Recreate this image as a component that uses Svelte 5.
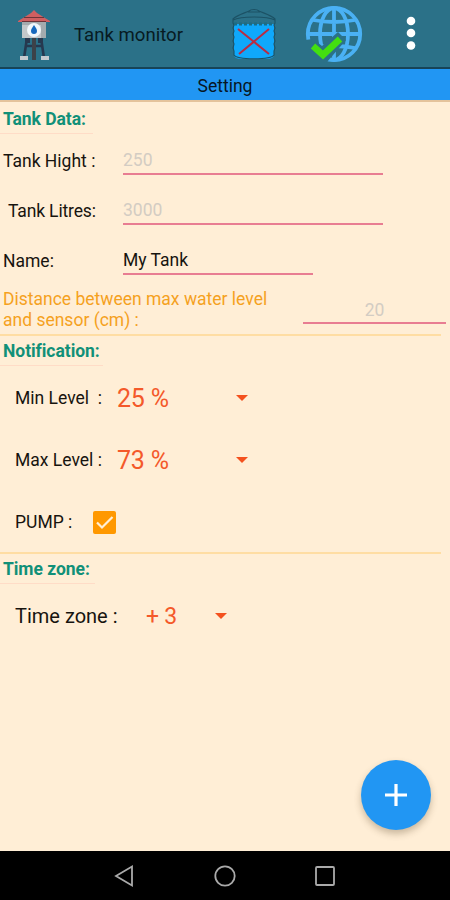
<script>
    let tank = $state({ height: '', litres: '', name: 'My Tank', distance: '' });
    let pump = $state(true);

    const levels = [
        { label: 'Min Level\u00a0 :', value: '25 %' },
        { label: 'Max Level :', value: '73 %' }
    ];
</script>

<div class="screen">
    <header>
        <svg class="tower" viewBox="0 0 34 52" width="34" height="52">
            <path d="M10 29 7 49M24 29l3 20M8 37h18" stroke="#26384f" stroke-width="2.6" fill="none" />
            <path d="M17 29v22" stroke="#3c4249" stroke-width="4" />
            <path d="M8 29h5v5H8zM21 29h5v5h-5z" fill="#26384f" />
            <path d="M5 13h24v16H5z" fill="#c3c8ca" />
            <path d="M5 13h24v3H5zM24 13h5v16h-5z" fill="#a4abae" />
            <path d="M17 1l3 3 8 5 5 3v1H1v-1l5-3 8-5z" fill="#cf5f61" />
            <path d="M7 8.5h20M5 12.5h24" stroke="#6c3439" stroke-width="1.2" />
            <circle cx="17" cy="21" r="7" fill="#f2f8fb" />
            <path d="M17 16c2 3 3 4 3 6a3 3 0 0 1-6 0c0-2 1-3 3-6z" fill="#1769bd" />
            <path d="M3 47h8v4H3zM24 47h8v4h-8z" fill="#c5cad0" />
        </svg>
        <h1>Tank monitor</h1>
        <svg class="barrel" viewBox="0 0 46 54" width="46" height="54">
            <path d="M3 16h40v32q-2 3-7 3H10q-5 0-7-3z" fill="#0fa8fb" />
            <path d="M2 11C6 7 14 5 18 3c2-2 8-2 10 0 4 2 12 4 16 8v4l-1 2 1 3-1 3 1 3-1 3 1 4-1 3 1 4-1 3v4c-3 5-37 5-40 0v-4l-1-3 1-4-1-3 1-4-1-3 1-3-1-3 1-3-1-2zM2 12c8-4 34-4 42 0M17 4h12" fill="none" stroke="#1c5265" stroke-width="1.1" />
            <path d="M3 16h40" stroke="#1b6c84" stroke-width="3" stroke-dasharray="3 2" />
            <path d="M7 21l31 25M38 21 8 46" stroke="#b92c42" stroke-width="2" />
        </svg>
        <svg class="globe" viewBox="0 0 58 58" width="58" height="58">
            <g fill="none" stroke="#4ab1f4" stroke-width="3.8">
                <circle cx="29" cy="29" r="26.2" />
                <ellipse cx="29" cy="29" rx="14" ry="26" />
                <path d="M29 2v54M2 29h54M8 15q21 4 42 0M8 43q21-4 42 0" />
            </g>
            <path d="M0 35l8-1 9 7 16-14 8 8-19 22-4 1H0z" fill="#2b7188" />
            <path d="M8 41l10 9 17-16" fill="none" stroke="#43df10" stroke-width="6.6" />
        </svg>
        <svg class="more" viewBox="0 0 10 36" width="10" height="36">
            <g fill="#fff">
                <circle cx="5" cy="5" r="4.3" />
                <circle cx="5" cy="17" r="4.3" />
                <circle cx="5" cy="29.5" r="4.3" />
            </g>
        </svg>
    </header>

    <div class="title">Setting</div>

    <main>
        <h2 class="data">Tank Data:</h2>
        <label class="row">
            <span>Tank Hight :</span>
            <input placeholder="250" bind:value={tank.height} />
        </label>
        <label class="row">
            <span class="litres">Tank Litres:</span>
            <input placeholder="3000" bind:value={tank.litres} />
        </label>
        <label class="row">
            <span>Name:</span>
            <input class="name" bind:value={tank.name} />
        </label>
        <label class="distance">
            <span>Distance between max water level<br />and sensor (cm) :</span>
            <input placeholder="20" bind:value={tank.distance} />
        </label>
        <hr />

        <h2 class="notification">Notification:</h2>
        {#each levels as level}
            <div class="level">
                <span class="label">{level.label}</span>
                <span class="value">{level.value}</span>
                <i class="arrow"></i>
            </div>
        {/each}
        <div class="pump">
            <span>PUMP :</span>
            <button class="check" aria-label="Pump" onclick={() => pump = !pump}>
                {#if pump}
                    <svg viewBox="0 0 23 23" width="23" height="23">
                        <path d="M4 11.5l5 5L19.5 6" fill="none" stroke="#ffeed6" stroke-width="2.2" />
                    </svg>
                {/if}
            </button>
        </div>
        <hr />

        <h2 class="zone">Time zone:</h2>
        <div class="timezone">
            <span class="label">Time zone :</span>
            <span class="value">+ 3</span>
            <i class="arrow"></i>
        </div>

        <button class="add" aria-label="Add">
            <svg viewBox="0 0 24 24" width="24" height="24">
                <path d="M12 1v22M1 12h22" stroke="#fff" stroke-width="3.2" />
            </svg>
        </button>
    </main>

    <nav>
        <svg viewBox="0 0 24 24" width="24" height="24">
            <path d="M19 2.5v19L3 12z" />
        </svg>
        <svg viewBox="0 0 24 24" width="24" height="24">
            <circle cx="12" cy="12" r="9.7" />
        </svg>
        <svg viewBox="0 0 24 24" width="24" height="24">
            <rect x="3" y="3" width="18" height="18" rx="1" />
        </svg>
    </nav>
</div>

<style>
    :global(body) {
        margin: 0;
    }
    .screen {
        width: 450px;
        height: 900px;
        display: flex;
        flex-direction: column;
        overflow: hidden;
        background: #ffeed6;
        color: #17140f;
        font-family: Roboto, sans-serif;
        font-size: 17.5px;
    }
    svg {
        display: block;
        flex: none;
    }
    header {
        box-sizing: border-box;
        height: 69px;
        flex: none;
        display: flex;
        align-items: center;
        padding-left: 17px;
        background: #2b7188;
        border-bottom: 2px solid #174458;
    }
    .tower {
        margin-top: 2px;
    }
    h1 {
        width: 157px;
        margin: 3px 0 0 23px;
        font-size: 18.6px;
        font-weight: 400;
        color: #071b22;
    }
    .barrel {
        margin-top: 2px;
    }
    .globe {
        margin-left: 28px;
    }
    .more {
        margin-left: 43px;
    }
    .title {
        box-sizing: border-box;
        height: 33px;
        flex: none;
        line-height: 34px;
        text-align: center;
        color: #071625;
        background: #2196f3;
        border-bottom: 2px solid #e4c39c;
    }
    main {
        flex: 1;
        display: flex;
        flex-direction: column;
    }
    h2 {
        box-sizing: border-box;
        height: 30px;
        margin: 0;
        padding-left: 3px;
        font-size: 17.5px;
        font-weight: 700;
        line-height: 30px;
        letter-spacing: -0.05px;
        color: #119078;
        border-bottom: 1px solid #ffdcc7;
    }
    .data {
        width: 93px;
        height: 32px;
        margin-bottom: 1px;
        line-height: 34px;
    }
    .notification {
        width: 103px;
    }
    .zone {
        width: 95px;
    }
    .row {
        height: 50px;
        display: flex;
        align-items: center;
        padding-left: 3px;
    }
    .row span {
        box-sizing: border-box;
        width: 120px;
        padding-top: 1px;
    }
    .row .litres {
        padding-left: 5px;
        letter-spacing: -0.15px;
    }
    input {
        box-sizing: border-box;
        width: 260px;
        height: 29px;
        padding: 2px 0 0;
        border: 0;
        border-bottom: 2px solid #e87d92;
        border-radius: 0;
        background: none;
        outline: none;
        font: inherit;
        color: inherit;
    }
    input::placeholder {
        color: #d3ccc3;
    }
    .name {
        width: 190px;
    }
    .distance {
        height: 49px;
        display: flex;
        align-items: center;
        padding-left: 3px;
        line-height: 21px;
        color: #f5a11e;
    }
    .distance span {
        width: 300px;
        padding-top: 1px;
    }
    .distance input {
        width: 143px;
        text-align: center;
    }
    hr {
        width: 441px;
        height: 2px;
        margin: 0;
        border: 0;
        background: #ffdda3;
    }
    .level,
    .pump,
    .timezone {
        box-sizing: border-box;
        height: 62px;
        display: flex;
        align-items: center;
        padding: 2px 0 0 15px;
    }
    .level .label {
        width: 102px;
    }
    .level .value {
        width: 119px;
    }
    .value {
        font-size: 25px;
        letter-spacing: -0.2px;
        color: #f4592a;
    }
    .arrow {
        margin-top: -1px;
        border: 6px solid transparent;
        border-top-color: #f4511e;
        border-bottom: 0;
    }
    .pump span {
        width: 78px;
    }
    .check {
        width: 23px;
        height: 23px;
        padding: 0;
        border: 0;
        border-radius: 2px;
        background: #ff9800;
    }
    .timezone .label {
        width: 131px;
        font-size: 20px;
    }
    .timezone .value {
        width: 69px;
        font-size: 23px;
    }
    .add {
        width: 70px;
        height: 70px;
        display: flex;
        align-items: center;
        justify-content: center;
        align-self: flex-end;
        margin: auto 19px 21px 0;
        padding: 0;
        border: 0;
        border-radius: 50%;
        background: #2196f3;
        box-shadow: 0 4px 7px rgba(80, 60, 30, 0.3);
    }
    nav {
        height: 49px;
        flex: none;
        display: flex;
        align-items: center;
        justify-content: center;
        gap: 76px;
        background: #000;
    }
    nav svg {
        fill: none;
        stroke: #aaa;
        stroke-width: 1.8;
    }
</style>
